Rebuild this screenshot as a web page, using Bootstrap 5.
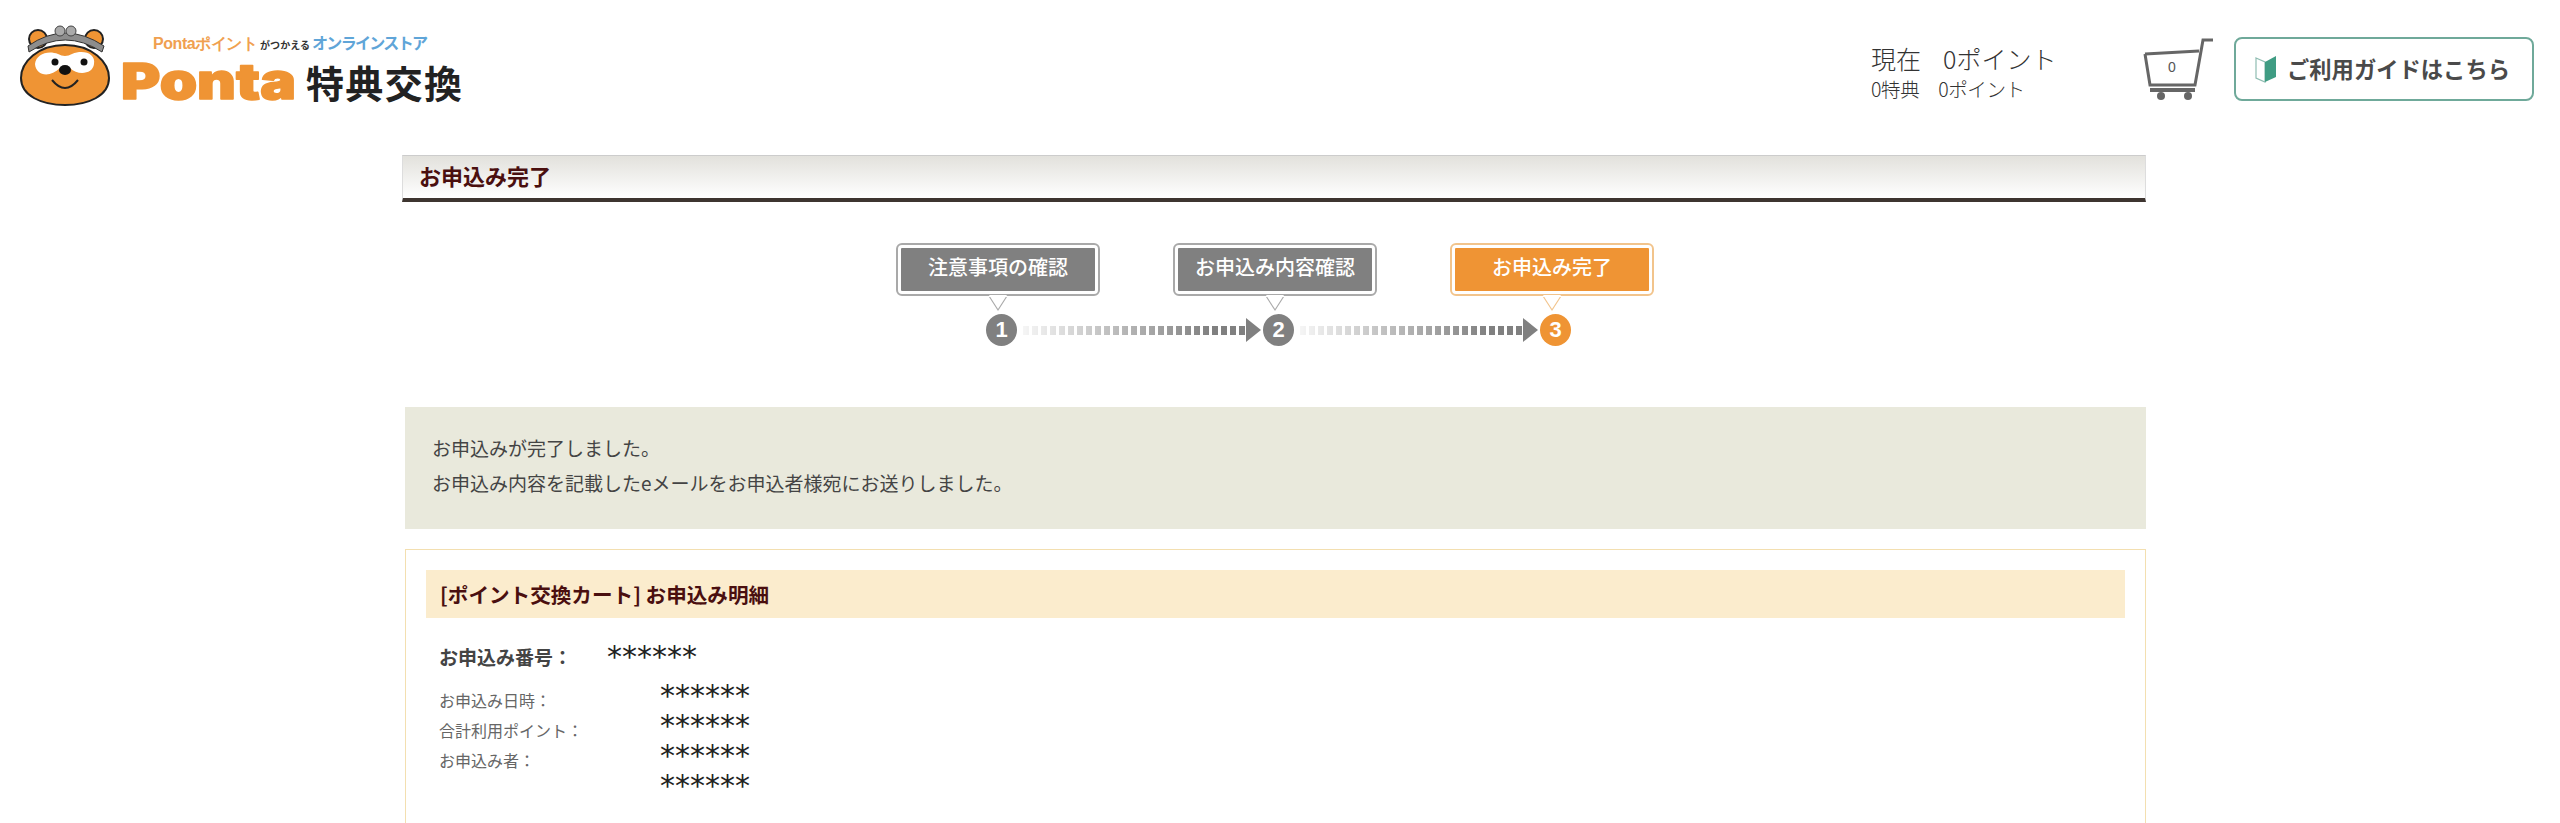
<!DOCTYPE html>
<html lang="ja">
<head>
<meta charset="utf-8">
<title>お申込み完了</title>
<link href="https://cdn.jsdelivr.net/npm/bootstrap@5.3.0/dist/css/bootstrap.min.css" rel="stylesheet">
<style>
html,body{height:823px;overflow:hidden;background:#fff}
body{font-family:"Noto Sans CJK JP","Liberation Sans",sans-serif;color:#444}
.top-head{height:155px;padding:37px 26px 0 0}
.logo-svg{display:block;margin-top:-14px}
.pt-main{font-size:25px;line-height:38px;color:#333;font-weight:300}
.pt-main span{margin-left:22px}
.pt-sub{font-size:19.5px;line-height:28px;color:#333;font-weight:300;margin-top:-2px;letter-spacing:-.4px}
.pt-sub span{margin-left:19px}
.pt-box{width:272px;padding-top:2px}
.cart-svg{display:block;margin-right:19px}
.guide-btn{width:300px;height:64px;border:2px solid #6fa99a;border-radius:8px;font-size:22.3px;font-weight:700;color:#4a4a4a;background:#fff;gap:10px;padding-left:19px}
.main-wrap{width:1741px;margin-left:405px}
.title-bar{height:47px;margin-left:-3px;background:linear-gradient(#e2e1dc,#fff);border:1px solid #ddd;border-top-color:#ccc;border-bottom:4px solid #3e3530;font-size:22px;font-weight:700;color:#4a0f0f;padding-left:16px;line-height:38px}
.step-area{padding-top:41px;height:205px}
.step-boxes{gap:73px;margin-left:491px}
.step-card{width:204px;height:53px;border:2px solid #a9a9a9;border-radius:6px;background:#fff;padding:3px;position:relative}
.step-fill{height:100%;background:#808080;color:#fff;font-size:20px;font-weight:500;line-height:38px;text-align:center;border-radius:1px}
.step-card::after{content:"";position:absolute;left:50%;bottom:-15px;margin-left:-9px;border:9px solid transparent;border-bottom:0;border-top:14px solid #fff;filter:drop-shadow(0 2px 0 #a9a9a9)}
.step-on{border-color:#f2c48c}
.step-on .step-fill{background:#ef9434}
.step-on::after{filter:drop-shadow(0 2px 0 #f2c48c)}
.step-line{margin-left:581px;margin-top:18px;height:32px}
.step-num{width:31px;height:32px;border-radius:50%;background:#808080;color:#fff;font-family:"Liberation Sans",sans-serif;font-weight:700;font-size:22px;line-height:32px;text-align:center;flex:none}
.num-on{background:#ef9434}
.step-link{width:246px;flex:none;padding:0 2px 0 6px}
.step-dots{flex:1;height:9px;background:repeating-linear-gradient(90deg,#808080 0 6px,transparent 6px 9px);-webkit-mask:linear-gradient(90deg,rgba(0,0,0,.08),#000 85%);mask:linear-gradient(90deg,rgba(0,0,0,.08),#000 85%)}
.step-head{width:0;height:0;border-top:12px solid transparent;border-bottom:12px solid transparent;border-left:15px solid #808080}
.done-msg{height:122px;background:#e9e9dc;padding:23px 27px;font-size:19px;line-height:35px;color:#444}
.detail-box{margin-top:20px;border:1px solid #f3dfb0;padding:20px 20px 0;height:290px}
.detail-head{height:48px;background:#fbeccd;font-size:20.6px;font-weight:700;color:#4a0f0f;line-height:48px;padding-left:14px}
.no-row{margin-top:17px;padding-left:13px;height:40px}
.no-label{width:168px;font-size:19px;font-weight:700;color:#444;line-height:40px;padding-top:2px}
.stars{font-family:"DejaVu Sans",sans-serif;font-size:30px;color:#222;line-height:30px;padding-top:7px}
.info-row{padding-left:13px}
.info-labels{width:221px;font-size:16px;line-height:30px;color:#666;padding-top:10px}
.info-vals .stars{display:block;height:30px;padding-top:6px}
</style>
</head>
<body>
<header class="top-head d-flex justify-content-between align-items-start">
  <svg class="logo-svg" width="470" height="100" viewBox="0 23 470 100" role="img" aria-label="Ponta特典交換">
    <circle cx="38" cy="39" r="9" fill="#ef9434" stroke="#222" stroke-width="2"/>
    <circle cx="94" cy="39" r="9" fill="#ef9434" stroke="#222" stroke-width="2"/>
    <path d="M65 45C92 45 109 62 109 78C109 96 88 105 65 105C42 105 21 96 21 78C21 62 38 45 65 45z" fill="#ef9434" stroke="#222" stroke-width="2"/>
    <path d="M29 52Q65 28 102 52l2-6Q65 20 28 46z" fill="#8d8d8d" stroke="#333" stroke-width="1"/>
    <circle cx="60" cy="31" r="5" fill="#aaa" stroke="#444"/><circle cx="71" cy="31" r="5" fill="#aaa" stroke="#444"/>
    <path d="M35 64C36 54 48 50 58 54Q65 58 72 54C84 49 96 54 94 64C93 74 78 76 70 68Q65 65 60 68C50 78 36 76 35 64z" fill="#fff"/>
    <circle cx="55" cy="62" r="3.5" fill="#111"/><circle cx="84" cy="62" r="3.5" fill="#111"/>
    <ellipse cx="65" cy="70" rx="6" ry="5" fill="#111"/>
    <path d="M52 80Q65 96 78 80" fill="none" stroke="#222" stroke-width="2"/>
    <text x="153" y="49" font-family="Liberation Sans" font-size="16" font-weight="700" fill="#f0a050" textLength="105">Pontaポイント</text>
    <text x="260" y="49" font-family="Noto Sans CJK JP" font-size="10" font-weight="700" fill="#333" textLength="50">がつかえる</text>
    <text x="312" y="49" font-family="Noto Sans CJK JP" font-size="16" font-weight="700" fill="#5fa5d8" textLength="116">オンラインストア</text>
    <text x="121" y="99" font-family="Inter" font-size="50" font-weight="900" fill="#ef9434" stroke="#ef9434" stroke-width="1.5" stroke-linejoin="round" textLength="175" lengthAdjust="spacingAndGlyphs">Ponta</text>
    <text x="306" y="98" font-family="Noto Sans CJK JP" font-size="38" font-weight="700" fill="#222" textLength="156">特典交換</text>
  </svg>
  <div class="d-flex align-items-start">
    <div class="pt-box">
      <div class="pt-main">現在<span>0ポイント</span></div>
      <div class="pt-sub">0特典<span>0ポイント</span></div>
    </div>
    <svg class="cart-svg" width="72" height="64" viewBox="0 0 72 64" role="img" aria-label="カート">
      <path d="M2 17L56 14" stroke="#666" stroke-width="3" fill="none"/>
      <path d="M2 17L7 48H52L60 3H70" stroke="#666" stroke-width="3" fill="none"/>
      <path d="M7 53H52" stroke="#666" stroke-width="4"/>
      <circle cx="18" cy="59" r="4" fill="#666"/><circle cx="45" cy="59" r="4" fill="#666"/>
      <text x="29" y="35" text-anchor="middle" font-family="Liberation Sans" font-size="14" fill="#555">0</text>
    </svg>
    <a class="guide-btn d-flex align-items-center text-decoration-none" href="#">
      <svg width="22" height="28" viewBox="0 0 22 28"><path d="M1 3L10 7V27L1 23z" fill="#fff" stroke="#8fbdb2" stroke-width="1.2"/><path d="M10 7L21 1V22L10 27z" fill="#3f9c83"/></svg>
      <span>ご利用ガイドはこちら</span>
    </a>
  </div>
</header>
<main class="main-wrap">
  <div class="title-bar">お申込み完了</div>
  <div class="step-area">
    <div class="step-boxes d-flex">
      <div class="step-card"><div class="step-fill">注意事項の確認</div></div>
      <div class="step-card"><div class="step-fill">お申込み内容確認</div></div>
      <div class="step-card step-on"><div class="step-fill">お申込み完了</div></div>
    </div>
    <div class="step-line d-flex align-items-center">
      <div class="step-num">1</div>
      <div class="step-link d-flex align-items-center"><div class="step-dots"></div><div class="step-head"></div></div>
      <div class="step-num">2</div>
      <div class="step-link d-flex align-items-center"><div class="step-dots"></div><div class="step-head"></div></div>
      <div class="step-num num-on">3</div>
    </div>
  </div>
  <div class="done-msg">
    <div>お申込みが完了しました。</div>
    <div>お申込み内容を記載したeメールをお申込者様宛にお送りしました。</div>
  </div>
  <section class="detail-box">
    <div class="detail-head">[ポイント交換カート] お申込み明細</div>
    <div class="no-row d-flex align-items-start">
      <div class="no-label">お申込み番号：</div>
      <div class="stars">******</div>
    </div>
    <div class="info-row d-flex">
      <div class="info-labels">
        <div>お申込み日時：</div>
        <div>合計利用ポイント：</div>
        <div>お申込み者：</div>
      </div>
      <div class="info-vals">
        <span class="stars">******</span>
        <span class="stars">******</span>
        <span class="stars">******</span>
        <span class="stars">******</span>
      </div>
    </div>
  </section>
</main>
<script src="https://cdn.jsdelivr.net/npm/bootstrap@5.3.0/dist/js/bootstrap.bundle.min.js"></script>
</body>
</html>
